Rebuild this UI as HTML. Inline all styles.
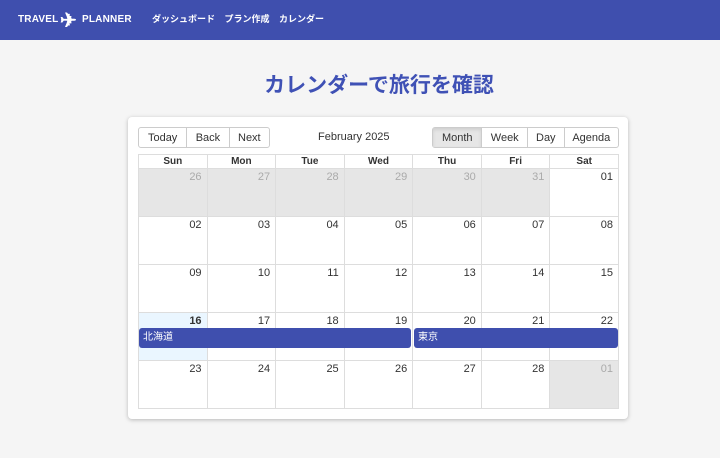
<!DOCTYPE html><html><head><meta charset="utf-8"><style>
*{box-sizing:border-box;margin:0;padding:0}
body{width:720px;height:458px;background:#f5f5f5;font-family:"Liberation Sans","Noto Sans CJK JP",sans-serif;position:relative;overflow:hidden}
.hd{height:40px;background:#3f4fae;color:#fff;position:relative}
.logo{position:absolute;left:18px;top:14px;font-weight:bold;font-size:10px;letter-spacing:.2px;white-space:nowrap}
.pl{position:absolute;left:42px;top:-6px;font-size:20px}
.nav{position:absolute;left:152px;top:12px;font-size:9px;font-weight:bold;word-spacing:7px;white-space:nowrap}
h1{position:absolute;top:69px;left:263px;width:232px;text-align:center;color:#3f51b5;font-size:21px;font-family:"Noto Sans CJK JP",sans-serif;font-weight:bold;white-space:nowrap}
.card{position:absolute;left:128px;top:117px;width:500px;height:302px;background:#fff;border-radius:4px;box-shadow:0 1px 4px rgba(0,0,0,.25)}
.bg{position:absolute;top:10px;height:21px;display:flex;border:1px solid #ccc;border-radius:3px;font-size:11px;color:#333}
.bg div{text-align:center;line-height:20px;border-left:1px solid #ccc}
.bg div:first-child{border-left:none}
.lbl{position:absolute;left:190px;top:14px;font-size:11px;color:#333}
table{position:absolute;left:10px;top:37px;width:481px;border-collapse:collapse;table-layout:fixed}
td,th{border:1px solid #ddd;font-size:10px}
th{height:14px;font-weight:bold;color:#333}
td{height:48px;vertical-align:top;text-align:right;padding:2px 5px;font-size:11px;color:#333}
.o{background:#e6e6e6;color:#aaa}
.t{background:#eaf6ff;font-weight:bold}
.ev{position:absolute;top:211px;height:20px;background:#3f4fae;color:#fff;font-size:10px;line-height:20px;padding-left:4px;border-radius:3px}
</style></head><body>
<div class="hd"><div class="logo">TRAVEL<span class="pl">✈</span><span style="position:absolute;left:64px">PLANNER</span></div><div class="nav">ダッシュボード プラン作成 カレンダー</div></div>
<h1>カレンダーで旅行を確認</h1>
<div class="card">
<div class="bg" style="left:10px;width:132px"><div style="width:48px">Today</div><div style="width:43px">Back</div><div style="width:41px">Next</div></div>
<div class="lbl">February 2025</div>
<div class="bg" style="left:304px;width:187px"><div style="width:49px;background:#e6e6e6;box-shadow:inset 0 2px 3px rgba(0,0,0,.1)">Month</div><div style="width:46px">Week</div><div style="width:37px">Day</div><div style="width:55px">Agenda</div></div>
<table>
<tr><th>Sun</th><th>Mon</th><th>Tue</th><th>Wed</th><th>Thu</th><th>Fri</th><th>Sat</th></tr>
<tr><td class="o">26</td><td class="o">27</td><td class="o">28</td><td class="o">29</td><td class="o">30</td><td class="o">31</td><td>01</td></tr>
<tr><td>02</td><td>03</td><td>04</td><td>05</td><td>06</td><td>07</td><td>08</td></tr>
<tr><td>09</td><td>10</td><td>11</td><td>12</td><td>13</td><td>14</td><td>15</td></tr>
<tr><td class="t">16</td><td>17</td><td>18</td><td>19</td><td>20</td><td>21</td><td>22</td></tr>
<tr><td>23</td><td>24</td><td>25</td><td>26</td><td>27</td><td>28</td><td class="o">01</td></tr>
</table>
<div class="ev" style="left:11px;width:272px">北海道</div>
<div class="ev" style="left:286px;width:204px">東京</div>
</div>
</body></html>
